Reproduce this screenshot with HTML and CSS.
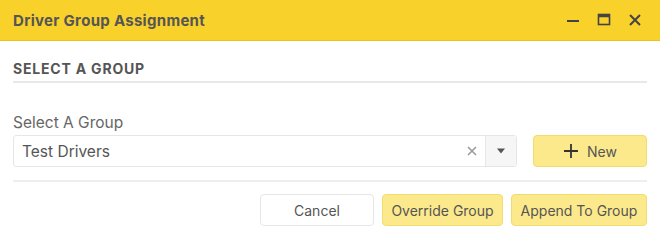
FILE: index.html
```html
<!DOCTYPE html>
<html lang="en">
<head>
<meta charset="utf-8">
<title>Driver Group Assignment</title>
<link rel="stylesheet" href="styles.css">
</head>
<body>
<div class="window">
  <div class="titlebar">
    <span class="title">Driver Group Assignment</span>
    <div class="actions">
      <svg width="14" height="14" viewBox="0 0 14 14"><path d="M1 8h12" stroke="#444" stroke-width="2"/></svg>
      <svg width="14" height="14" viewBox="0 0 14 14"><rect x="1.5" y="1.5" width="11" height="10" fill="none" stroke="#444" stroke-width="1.6"/><path d="M1.5 3h11" stroke="#444" stroke-width="2.5"/></svg>
      <svg width="14" height="14" viewBox="0 0 14 14"><path d="M2 2l10 10M12 2L2 12" stroke="#444" stroke-width="2"/></svg>
    </div>
  </div>
  <div class="content">
    <h2 class="section">Select A Group</h2>
    <label class="label">Select A Group</label>
    <div class="row">
      <div class="combo">
        <span class="value">Test Drivers</span>
        <span class="clear"><svg width="10" height="10" viewBox="0 0 10 10"><path d="M1 1l8 8M9 1L1 9" stroke="#9a9a9a" stroke-width="1.6"/></svg></span>
        <span class="arrow"><svg width="10" height="8" viewBox="0 0 10 8"><path d="M1 1.5h8L5 6.5z" fill="#555"/></svg></span>
      </div>
      <button class="btn btn-yellow btn-new"><svg width="16" height="16" viewBox="0 0 16 16"><path d="M8 1v14M1 8h14" stroke="#333" stroke-width="1.8"/></svg>New</button>
    </div>
    <div class="footer">
      <button class="btn btn-cancel">Cancel</button>
      <button class="btn btn-yellow btn-override">Override Group</button>
      <button class="btn btn-yellow btn-append">Append To Group</button>
    </div>
  </div>
</div>
</body>
</html>
```
FILE: styles.css
```css
body {
	margin: 0;
	font-family: "Inter", "Open Sans", sans-serif;
	background: #ffffff;
	color: #555555;
}
.window {
	width: 660px;
	height: 245px;
}
.titlebar {
	height: 40px;
	background-color: #f9d12b;
	border-bottom: 1px solid #eac21c;
	display: flex;
	align-items: center;
	justify-content: space-between;
	padding: 0 18px 0 13px;
}
.title {
	font-size: 15px;
	font-weight: bold;
	color: #555555;
	letter-spacing: 0.3px;
}
.actions {
	display: flex;
	gap: 17px;
	align-items: center;
}
.content {
	padding: 0 13px;
}
.section {
	margin: 19px 0 0 0;
	font-size: 14px;
	line-height: 17px;
	font-weight: bold;
	text-transform: uppercase;
	letter-spacing: 0.8px;
	color: #555555;
	padding-bottom: 4px;
	border-bottom: 2px solid #e8e8e8;
}
.label {
	display: block;
	margin-top: 30px;
	font-size: 15.5px;
	color: #666666;
	line-height: 19px;
}
.row {
	display: flex;
	margin-top: 3px;
	gap: 16px;
	padding-bottom: 13px;
	border-bottom: 2px solid #eeeeee;
}
.combo {
	flex: 1;
	height: 32px;
	box-sizing: border-box;
	border: 1px solid #e6e6e6;
	border-radius: 3px;
	display: flex;
	align-items: center;
	font-size: 15.5px;
	color: #555555;
}
.value {
	flex: 1;
	padding-left: 8px;
}
.clear {
	display: flex;
	padding-right: 8px;
}
.arrow {
	width: 30px;
	height: 30px;
	background: #f6f6f6;
	border-left: 1px solid #e6e6e6;
	display: flex;
	align-items: center;
	justify-content: center;
}
.btn {
	height: 32px;
	box-sizing: border-box;
	border-radius: 4px;
	font-family: inherit;
	font-size: 14px;
	color: #555555;
	display: flex;
	align-items: center;
	justify-content: center;
	gap: 8px;
}
.btn-yellow {
	background-color: #fce98c;
	border: 1px solid #f2dc6e;
}
.btn-new {
	width: 114px;
}
.footer {
	display: flex;
	justify-content: flex-end;
	gap: 8px;
	margin-top: 12px;
}
.btn-cancel {
	background: #ffffff;
	border: 1px solid #e6e6e6;
	width: 114px;
}
.btn-override {
	width: 121px;
}
.btn-append {
	width: 136px;
}
```
